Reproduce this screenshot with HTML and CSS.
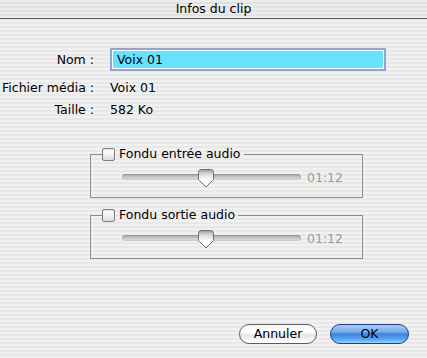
FILE: index.html
```html
<!DOCTYPE html>
<html lang="fr">
<head>
<meta charset="utf-8">
<title>Infos du clip</title>
<link rel="stylesheet" href="styles.css">
</head>
<body>
<div class="window">
  <div class="titlebar">Infos du clip</div>
  <div class="content">
    <div class="info">
      <div class="label row1">Nom :</div>
      <div class="value row1"><div class="field">Voix 01</div></div>
      <div class="label row2">Fichier média :</div>
      <div class="value row2">Voix 01</div>
      <div class="label row3">Taille :</div>
      <div class="value row3">582 Ko</div>
    </div>

    <fieldset class="group first">
      <legend class="legend"><span class="check"></span><span>Fondu entrée audio</span></legend>
      <div class="slider-row">
        <div class="track">
          <svg class="thumb" width="16" height="19" viewBox="0 0 16 19">
            <defs>
              <linearGradient id="tg1" x1="0" y1="0" x2="0" y2="1">
                <stop offset="0" stop-color="#9c9c9c"/>
                <stop offset="0.25" stop-color="#d9d9d9"/>
                <stop offset="0.6" stop-color="#ffffff"/>
                <stop offset="1" stop-color="#f4f4f4"/>
              </linearGradient>
            </defs>
            <path d="M0.5,3.5 Q0.5,0.5 3.5,0.5 H12.5 Q15.5,0.5 15.5,3.5 V10.5 L8,18 L0.5,10.5 Z" fill="url(#tg1)" stroke="#6f6f6f" stroke-width="1"/>
          </svg>
        </div>
        <span class="time">01:12</span>
      </div>
    </fieldset>

    <fieldset class="group second">
      <legend class="legend"><span class="check"></span><span>Fondu sortie audio</span></legend>
      <div class="slider-row">
        <div class="track">
          <svg class="thumb" width="16" height="19" viewBox="0 0 16 19">
            <defs>
              <linearGradient id="tg2" x1="0" y1="0" x2="0" y2="1">
                <stop offset="0" stop-color="#9c9c9c"/>
                <stop offset="0.25" stop-color="#d9d9d9"/>
                <stop offset="0.6" stop-color="#ffffff"/>
                <stop offset="1" stop-color="#f4f4f4"/>
              </linearGradient>
            </defs>
            <path d="M0.5,3.5 Q0.5,0.5 3.5,0.5 H12.5 Q15.5,0.5 15.5,3.5 V10.5 L8,18 L0.5,10.5 Z" fill="url(#tg2)" stroke="#6f6f6f" stroke-width="1"/>
          </svg>
        </div>
        <span class="time">01:12</span>
      </div>
    </fieldset>

    <div class="buttons">
      <div class="btn cancel">Annuler</div>
      <div class="btn ok">OK</div>
    </div>
  </div>
</div>
</body>
</html>
```

FILE: styles.css
```css
html, body {
  margin: 0;
  padding: 0;
}
body {
  width: 427px;
  height: 358px;
  overflow: hidden;
  font-family: "DejaVu Sans", "Liberation Sans", sans-serif;
  font-size: 12.5px;
  color: #000;
}
.window {
  width: 427px;
  height: 358px;
  background: repeating-linear-gradient(to bottom, #f1f1f1 0, #f1f1f1 2px, #e8e8e8 2px, #e8e8e8 4px);
}
.titlebar {
  height: 18px;
  line-height: 18px;
  text-align: center;
  border-bottom: 1px solid #5e5e5e;
  background: repeating-linear-gradient(to bottom, #ececec 0, #ececec 2px, #e2e2e2 2px, #e2e2e2 4px);
  font-size: 12.5px;
}
.content {
  padding-top: 29px;
}
.info {
  display: grid;
  grid-template-columns: 94px 1fr;
  column-gap: 16px;
  align-items: center;
}
.label {
  text-align: right;
  line-height: 16px;
}
.value {
  line-height: 16px;
}
.row1 { height: 23px; display: flex; align-items: center; }
.label.row1 { justify-content: flex-end; }
.row2 { margin-top: 9px; }
.row3 { margin-top: 6px; }
.field {
  width: 266px;
  height: 17px;
  line-height: 17px;
  padding-left: 4px;
  background: #66e2ff;
  border: 1px solid #fff;
  outline: 2px solid #8fa6cf;
  margin-left: 2px;
  box-sizing: content-box;
}
.group {
  margin: 29px 0 0 90px;
  padding: 0;
  width: 271px;
  height: 49px;
  border: 1px solid #8c8c8c;
  box-sizing: content-box;
}
.group.second {
  margin-top: 10px;
}
.legend {
  margin-left: 11px;
  padding: 0 3px 0 0;
  display: flex;
  align-items: center;
  gap: 4px;
  line-height: 14px;
}
.check {
  width: 11px;
  height: 11px;
  border: 1px solid #808080;
  border-radius: 2px;
  background: linear-gradient(#ffffff, #f2f2f2 50%, #dadada);
  box-shadow: inset 0 1px 1px rgba(0,0,0,0.12);
}
.slider-row {
  display: flex;
  align-items: center;
  padding-left: 31px;
  margin-top: 7px;
  gap: 6px;
}
.track {
  position: relative;
  width: 179px;
  height: 6px;
  border-radius: 3px;
  background: linear-gradient(#9e9e9e, #c4c4c4 45%, #e2e2e2 100%);
  box-shadow: inset 0 0 0 1px rgba(0,0,0,0.08);
}
.thumb {
  position: absolute;
  left: 76px;
  top: -5px;
}
.time {
  color: #9a9a9a;
  line-height: 16px;
  margin-top: 2px;
}
.buttons {
  display: flex;
  justify-content: flex-end;
  gap: 13px;
  margin-top: 65px;
  padding-right: 18px;
}
.btn {
  height: 18px;
  line-height: 18px;
  border-radius: 10px;
  text-align: center;
  font-size: 12.5px;
}
.cancel {
  width: 76px;
  border: 1px solid #5c5c5c;
  background: linear-gradient(#f5f5f5 0%, #ffffff 40%, #e6e6e6 55%, #f6f6f6 85%, #ffffff 100%);
}
.ok {
  width: 77px;
  border: 1px solid #213f7c;
  background: linear-gradient(#a6c9f3 0%, #7fb0ec 35%, #3f86e0 52%, #5aa6f2 80%, #9ad4fb 100%);
}
```
